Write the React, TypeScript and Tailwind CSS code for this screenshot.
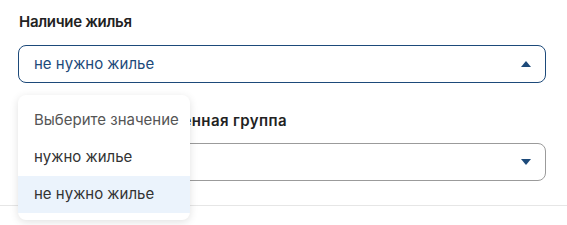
import React from "react";

const font = { fontFamily: '"Inter", "Noto Sans", sans-serif' };

function Caret({ up }: { up?: boolean }) {
  return (
    <svg width="10" height="6" viewBox="0 0 10 6" className="shrink-0">
      {up ? <path d="M0 6 L5 0 L10 6 Z" fill="#1d4a7a" /> : <path d="M0 0 L5 6 L10 0 Z" fill="#1d4a7a" />}
    </svg>
  );
}

export default function App() {
  return (
    <div className="w-[567px] h-[225px] bg-white overflow-hidden relative" style={font}>
      <div className="pl-[18px] pr-[21px] pt-[12px]">
        <div className="text-[15px] font-semibold text-[#222] leading-[20px] pl-[1px] tracking-[-0.3px]">Наличие жилья</div>
        <div className="mt-[13px] h-[38px] rounded-[8px] border border-[#1d4a7a] flex items-center justify-between pl-[15px] pr-[14px]">
          <span className="text-[15px] text-[#1d4a7a]">не нужно жилье</span>
          <Caret up />
        </div>
        <div className="mt-[28px] text-[15px] font-semibold text-[#222] leading-[20px] pl-[1px] whitespace-nowrap tracking-[0.4px]">Социально незащищенная группа</div>
        <div className="mt-[12px] h-[38px] rounded-[8px] border border-[#9b9b9b] flex items-center justify-end pr-[14px]">
          <Caret />
        </div>
      </div>
      <div className="mt-[24px] h-px bg-[#e6e6e6]" />
      <div className="absolute left-[18px] top-[95px] w-[172px] rounded-[8px] bg-white shadow-[0_2px_8px_rgba(0,0,0,0.12)] pt-[6px] pb-[7px]">
        <div className="h-[38px] flex items-center pl-[16px] text-[15px] text-[#555] whitespace-nowrap">Выберите значение</div>
        <div className="h-[37px] flex items-center pl-[16px] text-[15px] text-[#333]">нужно жилье</div>
        <div className="h-[37px] flex items-center pl-[16px] text-[15px] text-[#333] bg-[#ebf3fc]">не нужно жилье</div>
      </div>
    </div>
  );
}
